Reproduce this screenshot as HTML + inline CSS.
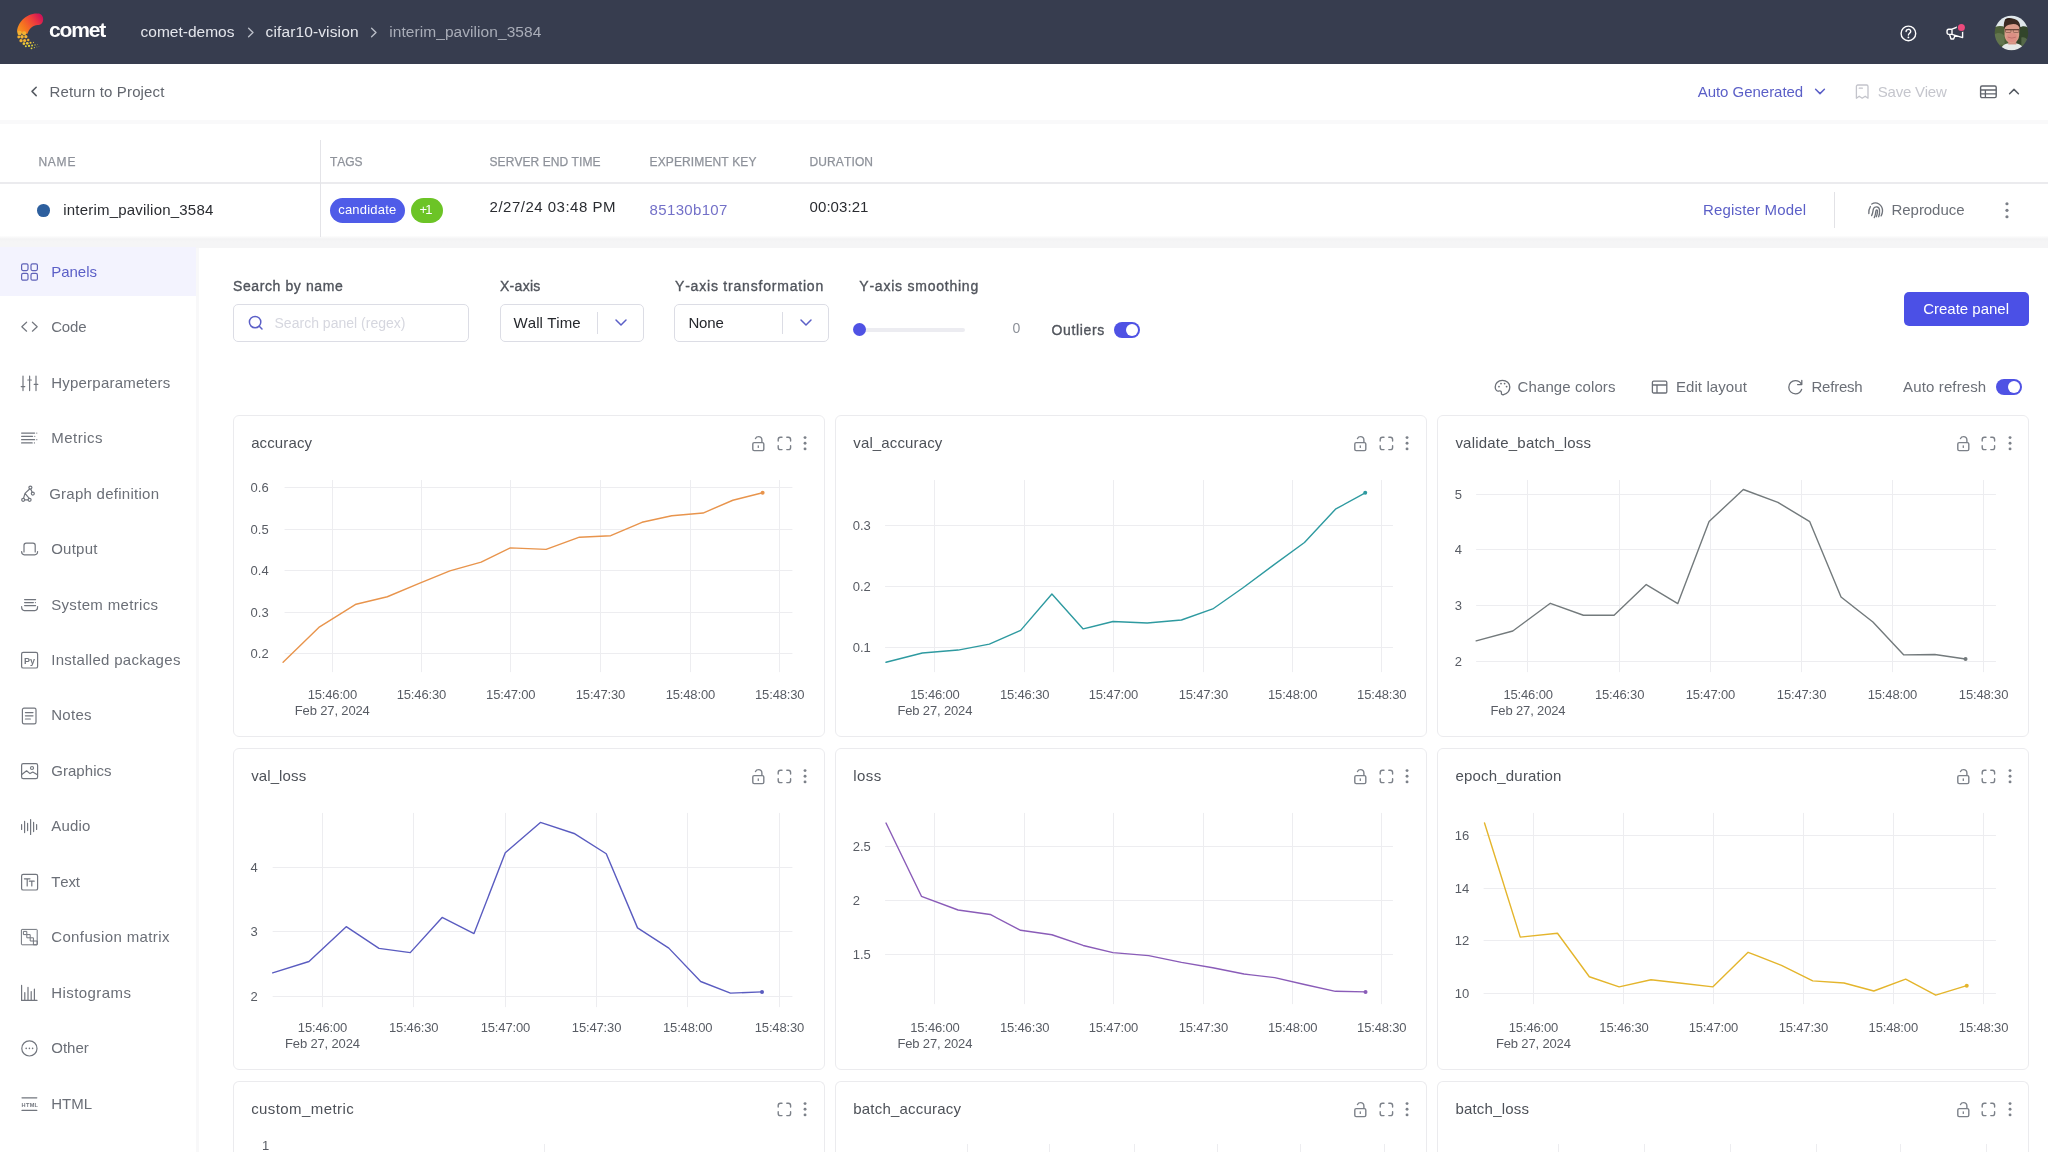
<!DOCTYPE html>
<html><head><meta charset="utf-8"><title>comet</title>
<style>
html,body{margin:0;padding:0;}
body{width:2048px;height:1152px;overflow:hidden;position:relative;background:#fff;font-family:"Liberation Sans",sans-serif;font-kerning:none;-webkit-font-smoothing:antialiased;}
.t{position:absolute;white-space:nowrap;}
.b{position:absolute;box-sizing:border-box;}
#root{position:absolute;left:0;top:0;width:2048px;height:1152px;will-change:transform;}
</style></head><body><div id="root">
<div class="b" style="left:0px;top:0px;width:2048px;height:64px;background:#373d4f;"></div>
<div class="b" style="left:0px;top:120px;width:2048px;height:4px;background:#f9f9fa;"></div>
<div class="b" style="left:0px;top:236px;width:2048px;height:12px;background:#f5f5f6;background:linear-gradient(#fdfdfd 0,#f3f3f4 3px,#f5f5f6 6px);"></div>
<div class="b" style="left:196px;top:248px;width:3px;height:904px;background:#f8f8f9;"></div>
<svg class="b" style="left:8px;top:8px;" width="112" height="48" viewBox="0 0 2048 878" fill="none">
<defs><linearGradient id="lg" x1="620" y1="170" x2="200" y2="470" gradientUnits="userSpaceOnUse">
<stop offset="0" stop-color="#cf1457"/><stop offset=".3" stop-color="#ef3b3d"/><stop offset=".7" stop-color="#f6741f"/><stop offset="1" stop-color="#f59a23"/></linearGradient></defs>
<path d="M545 103 C600 100 648 150 643 215 C638 280 600 315 555 310 C470 300 385 375 355 470 L168 450 C160 290 320 95 545 103 Z" fill="url(#lg)"/>
<g fill="#f2b233">
<circle cx="212" cy="458" r="40"/><circle cx="296" cy="462" r="38"/>
<circle cx="196" cy="530" r="26"/><circle cx="256" cy="528" r="33"/><circle cx="326" cy="524" r="30"/>
<circle cx="238" cy="598" r="30"/><circle cx="304" cy="594" r="29"/><circle cx="370" cy="584" r="22"/>
</g><g fill="#ecc536">
<circle cx="290" cy="652" r="24"/><circle cx="352" cy="646" r="25"/><circle cx="412" cy="636" r="19"/><circle cx="466" cy="628" r="11"/>
</g><g fill="#dfd43a">
<circle cx="326" cy="698" r="18"/><circle cx="384" cy="694" r="21"/><circle cx="440" cy="686" r="17"/><circle cx="494" cy="676" r="12"/><circle cx="540" cy="668" r="7"/>
<circle cx="430" cy="738" r="17"/><circle cx="482" cy="724" r="11"/><circle cx="528" cy="712" r="8"/><circle cx="566" cy="706" r="5"/>
</g></svg>
<div class="t" style="left:49.00px;top:18px;line-height:23px;font-size:21px;color:#fff;letter-spacing:-1.138px;font-weight:700;">comet</div>
<div class="t" style="left:140.50px;top:23px;line-height:17px;font-size:15.5px;color:#e4e6ec;letter-spacing:0.011px;">comet-demos</div>
<div class="t" style="left:265.50px;top:23px;line-height:17px;font-size:15.5px;color:#e4e6ec;letter-spacing:0.130px;">cifar10-vision</div>
<div class="t" style="left:389.30px;top:23px;line-height:17px;font-size:15.5px;color:#a9adb8;letter-spacing:0.060px;">interim_pavilion_3584</div>
<svg class="b" style="left:246.8px;top:26px;" width="8" height="13" viewBox="0 0 8 13" fill="none"><path d="M1.6 2.2 L6 6.5 L1.6 10.8" stroke="#b8bcc6" stroke-width="1.4" stroke-linecap="round" stroke-linejoin="round"/></svg>
<svg class="b" style="left:370.3px;top:26px;" width="8" height="13" viewBox="0 0 8 13" fill="none"><path d="M1.6 2.2 L6 6.5 L1.6 10.8" stroke="#b8bcc6" stroke-width="1.4" stroke-linecap="round" stroke-linejoin="round"/></svg>
<svg class="b" style="left:1898px;top:22.5px;" width="21" height="21" viewBox="0 0 21 21" fill="none"><circle cx="10.4" cy="10.4" r="7.3" stroke="#fff" stroke-width="1.4"/><path d="M8.1 8.6 C8.1 5.6 12.7 5.6 12.7 8.4 C12.7 10.2 10.4 10.2 10.4 12.1" stroke="#fff" stroke-width="1.4" stroke-linecap="round"/><circle cx="10.4" cy="14.4" r=".9" fill="#fff"/></svg>
<svg class="b" style="left:1944px;top:20px;" width="24" height="24" viewBox="0 0 24 24" fill="none"><path d="M4.6 9.2 C3.4 9.2 3 10.2 3 11.8 C3 13.4 3.4 14.4 4.6 14.4 L8 14.4 L8 9.2 Z M8 9.2 L18.6 5 L18.6 17.6 L8 14.4 M5.6 14.6 L7 19 L9.6 19 L11 15.6" stroke="#fff" stroke-width="1.4" stroke-linejoin="round" stroke-linecap="round"/>
<circle cx="17.4" cy="7.4" r="4.6" fill="#373d4f"/><circle cx="17.4" cy="7.4" r="3.5" fill="#ec4a7c"/></svg>
<svg class="b" style="left:1990px;top:12px;" width="44" height="42" viewBox="0 0 1207 1152" fill="none"><defs><clipPath id="av"><ellipse cx="588" cy="575" rx="460" ry="474"/></clipPath>
<filter id="bl" x="-10%" y="-10%" width="120%" height="120%"><feGaussianBlur stdDeviation="20"/></filter></defs>
<g clip-path="url(#av)"><g filter="url(#bl)">
<rect x="60" y="40" width="1100" height="1100" fill="#dfe7ea"/>
<path d="M60 470 C150 380 300 360 420 420 L620 420 L620 1100 L60 1100Z" fill="#4e6138"/>
<path d="M120 620 C220 540 330 580 400 660 L400 900 L120 900Z" fill="#62744d"/>
<path d="M600 430 L800 430 C900 360 1020 380 1100 470 L1100 1100 L600 1100Z" fill="#33452a"/>
<path d="M860 700 C940 680 1000 720 1060 800 L1060 950 L860 950Z" fill="#55684a"/>
<path d="M300 1060 C310 900 420 850 600 850 C800 850 900 900 930 1060 Z" fill="#e6eae8"/>
<rect x="500" y="760" width="220" height="130" fill="#d09080"/>
<path d="M400 420 C400 330 480 300 600 300 C720 300 805 330 805 420 L800 640 C790 780 700 860 600 860 C500 860 410 780 400 640Z" fill="#dc9d8b"/>
<ellipse cx="600" cy="700" rx="150" ry="130" fill="#dd8f84"/>
<path d="M385 470 C360 250 420 150 560 170 C720 170 850 260 830 470 C800 380 740 330 640 330 C520 340 440 360 385 470Z" fill="#3b2b22"/>
<path d="M400 230 C430 160 520 150 640 200 C560 200 470 220 400 230Z" fill="#2a1e19"/>
<path d="M410 472 H800 V500 H410Z" fill="#4a2f26"/>
<rect x="425" y="482" width="150" height="80" rx="24" fill="none" stroke="#6a4438" stroke-width="16"/>
<rect x="640" y="482" width="150" height="80" rx="24" fill="none" stroke="#6a4438" stroke-width="16"/>
<path d="M490 690 Q600 740 710 690" stroke="#b86a66" stroke-width="22" fill="none"/>
</g></g></svg>
<svg class="b" style="left:28px;top:84px;" width="12" height="15" viewBox="0 0 12 15" fill="none"><path d="M8.2 3.2 L4 7.4 L8.2 11.6" stroke="#555a62" stroke-width="1.5" stroke-linecap="round" stroke-linejoin="round"/></svg>
<div class="t" style="left:49.60px;top:83px;line-height:17px;font-size:15px;color:#62666e;letter-spacing:0.140px;">Return to Project</div>
<div class="t" style="left:1697.70px;top:83px;line-height:17px;font-size:15px;color:#5b5fc7;letter-spacing:-0.031px;">Auto Generated</div>
<svg class="b" style="left:1813px;top:85px;" width="14" height="13" viewBox="0 0 14 13" fill="none"><path d="M2.6 4.2 L7 8.6 L11.4 4.2" stroke="#5b5fc7" stroke-width="1.5" stroke-linecap="round" stroke-linejoin="round"/></svg>
<svg class="b" style="left:1854px;top:83px;" width="17" height="18" viewBox="0 0 17 18" fill="none"><path d="M2.4 3.4 C2.4 2.6 3 2 3.8 2 L12.6 2 C13.4 2 14 2.6 14 3.4 L14 15.2 L11.2 13.2 L8.2 15.2 L5.2 13.2 L2.4 15.2 Z" stroke="#c3c4cb" stroke-width="1.3" stroke-linejoin="round"/><path d="M5.2 5.2 L8.4 5.2" stroke="#c3c4cb" stroke-width="1.2" stroke-linecap="round"/></svg>
<div class="t" style="left:1877.80px;top:83px;line-height:17px;font-size:15px;color:#c5c6cd;letter-spacing:-0.239px;">Save View</div>
<svg class="b" style="left:1979px;top:84px;" width="19" height="16" viewBox="0 0 19 16" fill="none"><rect x="1.6" y="2" width="15.6" height="11.6" rx="1.4" stroke="#60646c" stroke-width="1.4"/><path d="M1.6 6 H17.2 M1.6 9.8 H17.2 M6.4 6 V13.6" stroke="#60646c" stroke-width="1.3"/></svg>
<svg class="b" style="left:2007px;top:85px;" width="14" height="13" viewBox="0 0 14 13" fill="none"><path d="M2.6 8.8 L7 4.4 L11.4 8.8" stroke="#555a62" stroke-width="1.5" stroke-linecap="round" stroke-linejoin="round"/></svg>
<div class="t" style="left:38.40px;top:155px;line-height:14px;font-size:12px;color:#8e929a;letter-spacing:0.777px;-webkit-text-stroke:0.25px #8e929a;">NAME</div>
<div class="t" style="left:330.00px;top:155px;line-height:14px;font-size:12px;color:#8e929a;letter-spacing:-0.057px;-webkit-text-stroke:0.25px #8e929a;">TAGS</div>
<div class="t" style="left:489.50px;top:155px;line-height:14px;font-size:12px;color:#8e929a;letter-spacing:0.070px;-webkit-text-stroke:0.25px #8e929a;">SERVER END TIME</div>
<div class="t" style="left:649.50px;top:155px;line-height:14px;font-size:12px;color:#8e929a;letter-spacing:0.126px;-webkit-text-stroke:0.25px #8e929a;">EXPERIMENT KEY</div>
<div class="t" style="left:809.50px;top:155px;line-height:14px;font-size:12px;color:#8e929a;letter-spacing:0.119px;-webkit-text-stroke:0.25px #8e929a;">DURATION</div>
<div class="b" style="left:0px;top:182px;width:2048px;height:2px;background:#ebebee;"></div>
<div class="b" style="left:320px;top:140px;width:1px;height:97px;background:#e4e4e8;"></div>
<div class="b" style="left:37.4px;top:204px;width:12.6px;height:12.6px;background:#2d5f9e;border-radius:50%;"></div>
<div class="t" style="left:63.20px;top:201px;line-height:17px;font-size:15px;color:#2a2c31;letter-spacing:0.209px;">interim_pavilion_3584</div>
<div class="b" style="left:329.8px;top:198px;width:75.4px;height:25px;background:#4f5ce8;border-radius:13px;"></div>
<div class="t" style="left:338.20px;top:202px;line-height:15px;font-size:13px;color:#fff;letter-spacing:0.203px;">candidate</div>
<div class="b" style="left:410.8px;top:198px;width:32.2px;height:25px;background:#6cc426;border-radius:13px;"></div>
<div class="t" style="left:419.60px;top:202px;line-height:15px;font-size:13px;color:#fff;letter-spacing:-2.020px;">+1</div>
<div class="t" style="left:489.60px;top:198px;line-height:17px;font-size:15px;color:#2a2c31;letter-spacing:0.492px;">2/27/24 03:48 PM</div>
<div class="t" style="left:649.60px;top:201px;line-height:17px;font-size:15px;color:#7370c8;letter-spacing:0.340px;">85130b107</div>
<div class="t" style="left:809.60px;top:198px;line-height:17px;font-size:15px;color:#2a2c31;letter-spacing:0.059px;">00:03:21</div>
<div class="t" style="left:1703.00px;top:201px;line-height:17px;font-size:15px;color:#5b5fc7;letter-spacing:0.163px;">Register Model</div>
<div class="b" style="left:1834px;top:192px;width:1px;height:36px;background:#e2e2e6;"></div>
<svg class="b" style="left:1850px;top:190px;" width="180" height="40" viewBox="0 0 2048 455" fill="none"><g stroke="#6e727a" stroke-width="15" stroke-linecap="round" fill="none">
<path d="M214 268 C212 235 218 210 232 188"/>
<path d="M248 160 C300 125 372 165 370 240 C369 262 362 280 354 294"/>
<path d="M246 292 C262 262 260 240 266 216 C276 180 332 184 336 226 C339 256 336 280 326 304"/>
<path d="M276 314 C290 288 292 262 294 242 C296 222 314 224 313 242 C312 264 308 284 300 304"/>
</g>
<g fill="#7b7f87"><circle cx="1786" cy="156" r="18"/><circle cx="1786" cy="231" r="18"/><circle cx="1786" cy="304" r="18"/></g></svg>
<div class="t" style="left:1891.50px;top:201px;line-height:17px;font-size:15px;color:#6b6f77;letter-spacing:-0.047px;">Reproduce</div>
<div class="b" style="left:0px;top:247px;width:196px;height:49px;background:#f3f3fe;"></div>
<div class="t" style="left:51.20px;top:263px;line-height:17px;font-size:15px;color:#5b5fc7;letter-spacing:-0.013px;">Panels</div>
<svg class="b" style="left:20px;top:261.8px;" width="20" height="20" viewBox="0 0 20 20" fill="none"><g stroke="#5f62b8" stroke-width="1.2" stroke-linecap="round" stroke-linejoin="round"><rect x="1.6" y="1.8" width="6.4" height="6.8" rx="1.5"/><rect x="11" y="1.8" width="6.4" height="6.8" rx="1.5"/><rect x="1.6" y="11.4" width="6.4" height="6.8" rx="1.5"/><rect x="11" y="11.4" width="6.4" height="6.8" rx="1.5"/></g></svg>
<div class="t" style="left:51.20px;top:318px;line-height:17px;font-size:15px;color:#6b6f77;letter-spacing:-0.152px;">Code</div>
<svg class="b" style="left:20px;top:317.27px;" width="20" height="20" viewBox="0 0 20 20" fill="none"><g stroke="#72767e" stroke-width="1.2" stroke-linecap="round" stroke-linejoin="round"><path d="M6.6 5.2 L1.8 9.7 L6.6 14.2 M12.4 5.2 L17.2 9.7 L12.4 14.2"/></g></svg>
<div class="t" style="left:51.20px;top:374px;line-height:17px;font-size:15px;color:#6b6f77;letter-spacing:0.223px;">Hyperparameters</div>
<svg class="b" style="left:20px;top:372.74px;" width="20" height="20" viewBox="0 0 20 20" fill="none"><g stroke="#72767e" stroke-width="1.2" stroke-linecap="round" stroke-linejoin="round"><path d="M3 3 V17.6 M9.6 3 V17.6 M16 3 V17.6 M1.2 13.6 H4.8 M7.8 7 H11.4 M14.2 11.4 H17.8"/></g></svg>
<div class="t" style="left:51.20px;top:429px;line-height:17px;font-size:15px;color:#6b6f77;letter-spacing:0.511px;">Metrics</div>
<svg class="b" style="left:20px;top:428.21000000000004px;" width="20" height="20" viewBox="0 0 20 20" fill="none"><g stroke="#72767e" stroke-width="1.2" stroke-linecap="round" stroke-linejoin="round"><path d="M1.6 5.05 H14.6 M1.6 8.35 H12.6 M1.6 11.65 H14.6 M1.6 14.95 H12.2"/></g><g fill="#72767e"><circle cx="16.8" cy="5.05" r=".6"/><circle cx="14.8" cy="8.35" r=".6"/><circle cx="16.8" cy="11.65" r=".6"/><circle cx="14.4" cy="14.95" r=".6"/></g></svg>
<div class="t" style="left:49.20px;top:485px;line-height:17px;font-size:15px;color:#6b6f77;letter-spacing:0.260px;">Graph definition</div>
<svg class="b" style="left:20px;top:483.68px;" width="20" height="20" viewBox="0 0 20 20" fill="none"><g stroke="#72767e" stroke-width="1.2" stroke-linecap="round" stroke-linejoin="round"><circle cx="10.4" cy="3.6" r="1.5"/><circle cx="12.8" cy="9.6" r="1.5"/><circle cx="3.2" cy="15.8" r="1.5"/><circle cx="9.6" cy="15.8" r="1.5"/><path d="M9.6 5 L5 9.4 L3.6 14.2 M5 9.4 L9.2 14.4 M10.8 5.2 L12.2 8.2 M4.8 15.8 H8"/></g></svg>
<div class="t" style="left:51.20px;top:540px;line-height:17px;font-size:15px;color:#6b6f77;letter-spacing:0.234px;">Output</div>
<svg class="b" style="left:20px;top:539.15px;" width="20" height="20" viewBox="0 0 20 20" fill="none"><g stroke="#72767e" stroke-width="1.2" stroke-linecap="round" stroke-linejoin="round"><path d="M4 13 V6.4 C4 5 5 4.2 6.2 4.2 H13 C14.2 4.2 15.2 5 15.2 6.4 V13 M1.6 12.6 C1.6 15 2.6 15.8 4.4 15.8 H14.6 C16.6 15.8 17.6 15 17.6 12.6"/></g></svg>
<div class="t" style="left:51.20px;top:596px;line-height:17px;font-size:15px;color:#6b6f77;letter-spacing:0.330px;">System metrics</div>
<svg class="b" style="left:20px;top:594.62px;" width="20" height="20" viewBox="0 0 20 20" fill="none"><g stroke="#72767e" stroke-width="1.2" stroke-linecap="round" stroke-linejoin="round"><path d="M4.6 4.6 H15.6 M4.6 7.6 H13.4 M4.6 10.6 H15.6 M1.6 11.6 C1.6 14.6 2.6 15.6 4.4 15.6 H14.8 C16.6 15.6 17.6 14.6 17.6 11.6"/></g><g fill="#72767e"><circle cx="15.4" cy="7.6" r=".6"/></g></svg>
<div class="t" style="left:51.20px;top:651px;line-height:17px;font-size:15px;color:#6b6f77;letter-spacing:0.291px;">Installed packages</div>
<svg class="b" style="left:20px;top:650.09px;" width="20" height="20" viewBox="0 0 20 20" fill="none"><g stroke="#72767e" stroke-width="1.2" stroke-linecap="round" stroke-linejoin="round"><rect x="1.6" y="2.4" width="16" height="15.6" rx="1.6"/></g><text x="4" y="13.6" font-family="Liberation Sans" font-size="9" font-weight="700" fill="#72767e">Py</text></svg>
<div class="t" style="left:51.20px;top:706px;line-height:17px;font-size:15px;color:#6b6f77;letter-spacing:0.304px;">Notes</div>
<svg class="b" style="left:20px;top:705.5600000000001px;" width="20" height="20" viewBox="0 0 20 20" fill="none"><g stroke="#72767e" stroke-width="1.2" stroke-linecap="round" stroke-linejoin="round"><rect x="2.4" y="2.2" width="13.6" height="15.6" rx="1.6"/><path d="M5.4 6.6 H13 M5.4 9.8 H13 M5.4 13 H10.4"/></g></svg>
<div class="t" style="left:51.20px;top:762px;line-height:17px;font-size:15px;color:#6b6f77;letter-spacing:0.054px;">Graphics</div>
<svg class="b" style="left:20px;top:761.0300000000001px;" width="20" height="20" viewBox="0 0 20 20" fill="none"><g stroke="#72767e" stroke-width="1.2" stroke-linecap="round" stroke-linejoin="round"><rect x="1.6" y="2.6" width="16" height="15" rx="1.6"/><circle cx="12" cy="7" r="1.5"/><path d="M1.8 13.4 L6.6 9.8 L10 12.6 L12.8 11 L17.4 13.8"/></g></svg>
<div class="t" style="left:51.20px;top:817px;line-height:17px;font-size:15px;color:#6b6f77;letter-spacing:0.209px;">Audio</div>
<svg class="b" style="left:20px;top:816.5000000000001px;" width="20" height="20" viewBox="0 0 20 20" fill="none"><g stroke="#72767e" stroke-width="1.2" stroke-linecap="round" stroke-linejoin="round"><path d="M1.6 7.6 V12.4 M4.6 4.4 V15.6 M7.6 6.4 V13.6 M10.6 2.6 V17.4 M13.6 5.4 V14.6 M16.6 7.6 V12.4"/></g></svg>
<div class="t" style="left:51.20px;top:873px;line-height:17px;font-size:15px;color:#6b6f77;letter-spacing:-0.125px;">Text</div>
<svg class="b" style="left:20px;top:871.9699999999999px;" width="20" height="20" viewBox="0 0 20 20" fill="none"><g stroke="#72767e" stroke-width="1.2" stroke-linecap="round" stroke-linejoin="round"><rect x="1.6" y="2.4" width="16" height="15.6" rx="1.6"/><path d="M4.4 6.8 H10 M7.2 6.8 V14 M9.4 9.2 H14.2 M11.8 9.2 V14"/></g></svg>
<div class="t" style="left:51.20px;top:928px;line-height:17px;font-size:15px;color:#6b6f77;letter-spacing:0.377px;">Confusion matrix</div>
<svg class="b" style="left:20px;top:927.4399999999999px;" width="20" height="20" viewBox="0 0 20 20" fill="none"><g stroke="#72767e" stroke-width="1" stroke-linejoin="round"><rect x="1.4" y="2.4" width="15.8" height="15.4" rx=".6"/><rect x="3.4" y="4.4" width="3.4" height="3.2" /><rect x="6.8" y="7.6" width="3.4" height="3.2"/><rect x="10.2" y="10.8" width="3.2" height="3.2"/><rect x="13.4" y="14" width="3.8" height="3.8"/></g></svg>
<div class="t" style="left:51.20px;top:984px;line-height:17px;font-size:15px;color:#6b6f77;letter-spacing:0.439px;">Histograms</div>
<svg class="b" style="left:20px;top:982.91px;" width="20" height="20" viewBox="0 0 20 20" fill="none"><g stroke="#72767e" stroke-width="1.2" stroke-linecap="round" stroke-linejoin="round"><path d="M1.6 2.4 V17.4 H17 M4.8 9.6 V17 M8 4.4 V17 M11.2 8.6 V17 M14.4 6.2 V17"/></g></svg>
<div class="t" style="left:51.20px;top:1039px;line-height:17px;font-size:15px;color:#6b6f77;letter-spacing:0.021px;">Other</div>
<svg class="b" style="left:20px;top:1038.3799999999999px;" width="20" height="20" viewBox="0 0 20 20" fill="none"><g stroke="#72767e" stroke-width="1.2" stroke-linecap="round" stroke-linejoin="round"><circle cx="9.4" cy="10.4" r="7.6"/></g><g fill="#72767e"><circle cx="6.2" cy="10.4" r=".8"/><circle cx="9.4" cy="10.4" r=".8"/><circle cx="12.6" cy="10.4" r=".8"/></g></svg>
<div class="t" style="left:51.20px;top:1095px;line-height:17px;font-size:15px;color:#6b6f77;letter-spacing:-0.010px;">HTML</div>
<svg class="b" style="left:20px;top:1093.85px;" width="20" height="20" viewBox="0 0 20 20" fill="none"><g stroke="#72767e" stroke-width="1.2" stroke-linecap="round" stroke-linejoin="round"><path d="M2 3.8 H16.8 M2 16.4 H16.8"/></g><text x="1.6" y="12.6" font-family="Liberation Sans" font-size="5.6" font-weight="700" fill="#72767e" letter-spacing=".3">HTML</text></svg>
<div class="t" style="left:233.00px;top:278px;line-height:16px;font-size:14px;color:#50545c;letter-spacing:0.604px;-webkit-text-stroke:0.35px #50545c;">Search by name</div>
<div class="b" style="left:232.5px;top:304px;width:236.5px;height:38px;background:#fff;border:1px solid #dcdde5;border-radius:5px;"></div>
<svg class="b" style="left:246px;top:313px;" width="20" height="20" viewBox="0 0 20 20" fill="none"><circle cx="9.1" cy="9.1" r="5.7" stroke="#5b5fc7" stroke-width="1.5"/><path d="M13.3 13.3 L16 16" stroke="#5b5fc7" stroke-width="1.5" stroke-linecap="round"/></svg>
<div class="t" style="left:274.50px;top:315px;line-height:16px;font-size:14px;color:#d6d7df;letter-spacing:0.014px;">Search panel (regex)</div>
<div class="t" style="left:500.00px;top:278px;line-height:16px;font-size:14px;color:#50545c;letter-spacing:0.281px;-webkit-text-stroke:0.35px #50545c;">X-axis</div>
<div class="b" style="left:499.5px;top:304px;width:144.2px;height:38px;background:#fff;border:1px solid #dcdde5;border-radius:5px;"></div>
<div class="t" style="left:513.60px;top:314px;line-height:17px;font-size:15px;color:#25272c;letter-spacing:0.042px;">Wall Time</div>
<div class="b" style="left:597.4px;top:312px;width:1px;height:22px;background:#dcdde5;"></div>
<svg class="b" style="left:613.5px;top:316px;" width="14" height="13" viewBox="0 0 14 13" fill="none"><path d="M2 4 L7 9 L12 4" stroke="#5b5fc7" stroke-width="1.5" stroke-linecap="round" stroke-linejoin="round"/></svg>
<div class="t" style="left:675.00px;top:278px;line-height:16px;font-size:14px;color:#50545c;letter-spacing:0.797px;-webkit-text-stroke:0.35px #50545c;">Y-axis transformation</div>
<div class="b" style="left:674.2px;top:304px;width:154.6px;height:38px;background:#fff;border:1px solid #dcdde5;border-radius:5px;"></div>
<div class="t" style="left:688.40px;top:314px;line-height:17px;font-size:15px;color:#25272c;letter-spacing:-0.152px;">None</div>
<div class="b" style="left:782.3px;top:312px;width:1px;height:22px;background:#dcdde5;"></div>
<svg class="b" style="left:798.6px;top:316px;" width="14" height="13" viewBox="0 0 14 13" fill="none"><path d="M2 4 L7 9 L12 4" stroke="#5b5fc7" stroke-width="1.5" stroke-linecap="round" stroke-linejoin="round"/></svg>
<div class="t" style="left:859.30px;top:278px;line-height:16px;font-size:14px;color:#50545c;letter-spacing:0.768px;-webkit-text-stroke:0.35px #50545c;">Y-axis smoothing</div>
<div class="b" style="left:860px;top:327.6px;width:105px;height:4.2px;background:#ececf1;border-radius:2px;"></div>
<div class="b" style="left:853.2px;top:323.2px;width:13px;height:13px;background:#4f52e4;border-radius:50%;"></div>
<div class="t" style="left:1012.40px;top:320px;line-height:16px;font-size:14px;color:#8c9098;">0</div>
<div class="t" style="left:1051.50px;top:322px;line-height:16px;font-size:14px;color:#50545c;letter-spacing:0.638px;-webkit-text-stroke:0.35px #50545c;">Outliers</div>
<div class="b" style="left:1114px;top:321.5px;width:26.2px;height:16.4px;background:#4f52e4;border-radius:9px;"></div>
<div class="b" style="left:1125.6px;top:323.5px;width:12.4px;height:12.4px;background:#fff;border-radius:50%;"></div>
<div class="b" style="left:1903.5px;top:292px;width:125.3px;height:33.8px;background:#4b50e6;border-radius:5px;"></div>
<div class="t" style="left:1923.20px;top:300px;line-height:17px;font-size:15px;color:#fff;letter-spacing:-0.008px;">Create panel</div>
<svg class="b" style="left:1492.5px;top:377.5px;" width="19" height="19" viewBox="0 0 19 19" fill="none"><g stroke="#6b6f77" stroke-width="1.3" stroke-linecap="round" stroke-linejoin="round">
<path d="M9.4 2.4 C4.8 2.4 2.2 5.6 2.2 9 C2.2 12 4.2 13.6 6 13 C7.6 12.4 8.6 13.4 8.4 15 C8.2 16.4 9.4 17 10.6 16.6 C14.4 15.6 16.8 12.6 16.8 9 C16.8 5.2 13.6 2.4 9.4 2.4Z"/></g>
<g fill="#6b6f77"><circle cx="6" cy="8.6" r=".9"/><circle cx="8" cy="5.6" r=".9"/><circle cx="11.6" cy="5.6" r=".9"/><circle cx="13.6" cy="8.6" r=".9"/></g></svg>
<div class="t" style="left:1517.60px;top:378px;line-height:17px;font-size:15px;color:#6b6f77;letter-spacing:0.090px;">Change colors</div>
<svg class="b" style="left:1650px;top:378px;" width="19" height="18" viewBox="0 0 19 18" fill="none"><rect x="2.4" y="3.2" width="14.4" height="11.8" rx="1.2" stroke="#6b6f77" stroke-width="1.3"/><path d="M2.4 7 H16.8 M7 7 V15" stroke="#6b6f77" stroke-width="1.3"/></svg>
<div class="t" style="left:1675.90px;top:378px;line-height:17px;font-size:15px;color:#6b6f77;letter-spacing:0.096px;">Edit layout</div>
<svg class="b" style="left:1786px;top:377.5px;" width="19" height="19" viewBox="0 0 19 19" fill="none"><path d="M15.4 6.2 C14.2 3.8 11.8 2.6 9.4 2.6 C5.6 2.6 2.8 5.6 2.8 9.2 C2.8 12.8 5.6 15.8 9.4 15.8 C12.2 15.8 14.6 14 15.6 11.4 M15.8 2.4 V6.6 H11.6" stroke="#6b6f77" stroke-width="1.3" stroke-linecap="round" stroke-linejoin="round"/></svg>
<div class="t" style="left:1811.50px;top:378px;line-height:17px;font-size:15px;color:#6b6f77;letter-spacing:-0.220px;">Refresh</div>
<div class="t" style="left:1903.10px;top:378px;line-height:17px;font-size:15px;color:#6b6f77;letter-spacing:0.127px;">Auto refresh</div>
<div class="b" style="left:1996px;top:378.8px;width:26.2px;height:16.4px;background:#4f52e4;border-radius:9px;"></div>
<div class="b" style="left:2007.6px;top:380.8px;width:12.4px;height:12.4px;background:#fff;border-radius:50%;"></div>
<div class="b" style="left:233px;top:415px;width:592px;height:322px;background:#fff;border:1px solid #ebebee;border-radius:6px;"></div>
<div class="t" style="left:251.15px;top:434px;line-height:17px;font-size:15px;color:#4d5158;letter-spacing:0.125px;">accuracy</div>
<svg class="b" style="left:750.25px;top:434.3px;" width="16" height="19" viewBox="0 0 16 19" fill="none"><rect x="2.8" y="8.6" width="11" height="8" rx="1.4" stroke="#7c8189" stroke-width="1.4"/><path d="M11.9 8.4 V6 C11.9 3.7 10.4 2.65 8.7 2.65 C7.2 2.65 6 3.4 5.5 4.5" stroke="#7c8189" stroke-width="1.4" stroke-linecap="round" fill="none"/><path d="M8.3 11.8 V13.4" stroke="#7c8189" stroke-width="1.3" stroke-linecap="round"/></svg>
<svg class="b" style="left:775.55px;top:435.3px;" width="17" height="17" viewBox="0 0 17 17" fill="none"><path d="M2.2 6 V4.4 C2.2 3 3 2.2 4.4 2.2 H6 M10.8 2.2 H12.4 C13.8 2.2 14.6 3 14.6 4.4 V6 M14.6 10.8 V12.4 C14.6 13.8 13.8 14.6 12.4 14.6 H10.8 M6 14.6 H4.4 C3 14.6 2.2 13.8 2.2 12.4 V10.8" stroke="#7c8189" stroke-width="1.4" stroke-linecap="round"/></svg>
<svg class="b" style="left:800.25px;top:433.3px;" width="10" height="22" viewBox="0 0 10 22" fill="none"><g fill="#7c8189"><circle cx="5.05" cy="4.6" r="1.45"/><circle cx="5.05" cy="10.3" r="1.45"/><circle cx="5.05" cy="15.9" r="1.45"/></g></svg>
<svg class="b" style="left:233px;top:415px;" width="592" height="322" viewBox="0 0 592 322" fill="none"><path d="M51.57 72.50 H559.41" stroke="#ededf0" stroke-width="1"/><path d="M51.57 114.50 H559.41" stroke="#ededf0" stroke-width="1"/><path d="M51.57 155.50 H559.41" stroke="#ededf0" stroke-width="1"/><path d="M51.57 197.50 H559.41" stroke="#ededf0" stroke-width="1"/><path d="M51.57 238.50 H559.41" stroke="#ededf0" stroke-width="1"/><path d="M99.50 65.00 V257.11" stroke="#ededf0" stroke-width="1"/><path d="M188.50 65.00 V257.11" stroke="#ededf0" stroke-width="1"/><path d="M277.50 65.00 V257.11" stroke="#ededf0" stroke-width="1"/><path d="M367.50 65.00 V257.11" stroke="#ededf0" stroke-width="1"/><path d="M457.50 65.00 V257.11" stroke="#ededf0" stroke-width="1"/><path d="M546.50 65.00 V257.11" stroke="#ededf0" stroke-width="1"/><path d="M50.08 247.28 L85.82 212.43 L123.05 189.20 L154.33 181.75 L185.60 168.65 L216.88 155.84 L248.15 147.20 L277.34 132.91 L313.08 134.39 L346.44 122.18 L377.72 120.69 L408.99 107.29 L438.78 100.74 L470.05 98.06 L499.84 85.25 L529.62 77.80" stroke="#e8944c" stroke-width="1.4" stroke-linejoin="round" stroke-linecap="round" fill="none"/><circle cx="529.62" cy="77.80" r="2" fill="#e8944c"/></svg>
<div class="t" style="left:250.55px;top:480px;line-height:15px;font-size:13px;color:#585c64;">0.6</div>
<div class="t" style="left:250.55px;top:522px;line-height:15px;font-size:13px;color:#585c64;">0.5</div>
<div class="t" style="left:250.55px;top:563px;line-height:15px;font-size:13px;color:#585c64;">0.4</div>
<div class="t" style="left:250.55px;top:605px;line-height:15px;font-size:13px;color:#585c64;">0.3</div>
<div class="t" style="left:250.55px;top:646px;line-height:15px;font-size:13px;color:#585c64;">0.2</div>
<div class="t" style="left:307.68px;top:687px;line-height:15px;font-size:13px;color:#585c64;letter-spacing:-0.157px;">15:46:00</div>
<div class="t" style="left:396.73px;top:687px;line-height:15px;font-size:13px;color:#585c64;letter-spacing:-0.157px;">15:46:30</div>
<div class="t" style="left:486.09px;top:687px;line-height:15px;font-size:13px;color:#585c64;letter-spacing:-0.157px;">15:47:00</div>
<div class="t" style="left:575.74px;top:687px;line-height:15px;font-size:13px;color:#585c64;letter-spacing:-0.157px;">15:47:30</div>
<div class="t" style="left:665.69px;top:687px;line-height:15px;font-size:13px;color:#585c64;letter-spacing:-0.157px;">15:48:00</div>
<div class="t" style="left:755.05px;top:687px;line-height:15px;font-size:13px;color:#585c64;letter-spacing:-0.157px;">15:48:30</div>
<div class="t" style="left:294.83px;top:703px;line-height:15px;font-size:13px;color:#585c64;letter-spacing:-0.147px;">Feb 27, 2024</div>
<div class="b" style="left:835px;top:415px;width:592px;height:322px;background:#fff;border:1px solid #ebebee;border-radius:6px;"></div>
<div class="t" style="left:853.30px;top:434px;line-height:17px;font-size:15px;color:#4d5158;letter-spacing:0.133px;">val_accuracy</div>
<svg class="b" style="left:1352.4px;top:434.3px;" width="16" height="19" viewBox="0 0 16 19" fill="none"><rect x="2.8" y="8.6" width="11" height="8" rx="1.4" stroke="#7c8189" stroke-width="1.4"/><path d="M11.9 8.4 V6 C11.9 3.7 10.4 2.65 8.7 2.65 C7.2 2.65 6 3.4 5.5 4.5" stroke="#7c8189" stroke-width="1.4" stroke-linecap="round" fill="none"/><path d="M8.3 11.8 V13.4" stroke="#7c8189" stroke-width="1.3" stroke-linecap="round"/></svg>
<svg class="b" style="left:1377.6999999999998px;top:435.3px;" width="17" height="17" viewBox="0 0 17 17" fill="none"><path d="M2.2 6 V4.4 C2.2 3 3 2.2 4.4 2.2 H6 M10.8 2.2 H12.4 C13.8 2.2 14.6 3 14.6 4.4 V6 M14.6 10.8 V12.4 C14.6 13.8 13.8 14.6 12.4 14.6 H10.8 M6 14.6 H4.4 C3 14.6 2.2 13.8 2.2 12.4 V10.8" stroke="#7c8189" stroke-width="1.4" stroke-linecap="round"/></svg>
<svg class="b" style="left:1402.4px;top:433.3px;" width="10" height="22" viewBox="0 0 10 22" fill="none"><g fill="#7c8189"><circle cx="5.05" cy="4.6" r="1.45"/><circle cx="5.05" cy="10.3" r="1.45"/><circle cx="5.05" cy="15.9" r="1.45"/></g></svg>
<svg class="b" style="left:835px;top:415px;" width="592" height="322" viewBox="0 0 592 322" fill="none"><path d="M50.10 110.50 H557.94" stroke="#ededf0" stroke-width="1"/><path d="M50.10 171.50 H557.94" stroke="#ededf0" stroke-width="1"/><path d="M50.10 232.50 H557.94" stroke="#ededf0" stroke-width="1"/><path d="M99.50 65.00 V257.11" stroke="#ededf0" stroke-width="1"/><path d="M189.50 65.00 V257.11" stroke="#ededf0" stroke-width="1"/><path d="M278.50 65.00 V257.11" stroke="#ededf0" stroke-width="1"/><path d="M368.50 65.00 V257.11" stroke="#ededf0" stroke-width="1"/><path d="M457.50 65.00 V257.11" stroke="#ededf0" stroke-width="1"/><path d="M546.50 65.00 V257.11" stroke="#ededf0" stroke-width="1"/><path d="M51.00 247.28 L87.33 238.05 L123.08 235.07 L154.35 229.11 L185.62 215.41 L216.90 179.07 L248.17 213.92 L277.96 206.47 L312.21 207.96 L346.46 204.99 L377.74 193.96 L408.42 172.52 L438.80 149.88 L469.48 127.54 L500.45 94.18 L530.24 77.80" stroke="#2e9aa0" stroke-width="1.4" stroke-linejoin="round" stroke-linecap="round" fill="none"/><circle cx="530.24" cy="77.80" r="2" fill="#2e9aa0"/></svg>
<div class="t" style="left:852.70px;top:518px;line-height:15px;font-size:13px;color:#585c64;">0.3</div>
<div class="t" style="left:852.70px;top:579px;line-height:15px;font-size:13px;color:#585c64;">0.2</div>
<div class="t" style="left:852.70px;top:640px;line-height:15px;font-size:13px;color:#585c64;">0.1</div>
<div class="t" style="left:910.29px;top:687px;line-height:15px;font-size:13px;color:#585c64;letter-spacing:-0.157px;">15:46:00</div>
<div class="t" style="left:999.95px;top:687px;line-height:15px;font-size:13px;color:#585c64;letter-spacing:-0.157px;">15:46:30</div>
<div class="t" style="left:1088.71px;top:687px;line-height:15px;font-size:13px;color:#585c64;letter-spacing:-0.157px;">15:47:00</div>
<div class="t" style="left:1178.66px;top:687px;line-height:15px;font-size:13px;color:#585c64;letter-spacing:-0.157px;">15:47:30</div>
<div class="t" style="left:1268.01px;top:687px;line-height:15px;font-size:13px;color:#585c64;letter-spacing:-0.157px;">15:48:00</div>
<div class="t" style="left:1357.07px;top:687px;line-height:15px;font-size:13px;color:#585c64;letter-spacing:-0.157px;">15:48:30</div>
<div class="t" style="left:897.44px;top:703px;line-height:15px;font-size:13px;color:#585c64;letter-spacing:-0.147px;">Feb 27, 2024</div>
<div class="b" style="left:1437px;top:415px;width:592px;height:322px;background:#fff;border:1px solid #ebebee;border-radius:6px;"></div>
<div class="t" style="left:1455.40px;top:434px;line-height:17px;font-size:15px;color:#4d5158;letter-spacing:0.214px;">validate_batch_loss</div>
<svg class="b" style="left:1954.5px;top:434.3px;" width="16" height="19" viewBox="0 0 16 19" fill="none"><rect x="2.8" y="8.6" width="11" height="8" rx="1.4" stroke="#7c8189" stroke-width="1.4"/><path d="M11.9 8.4 V6 C11.9 3.7 10.4 2.65 8.7 2.65 C7.2 2.65 6 3.4 5.5 4.5" stroke="#7c8189" stroke-width="1.4" stroke-linecap="round" fill="none"/><path d="M8.3 11.8 V13.4" stroke="#7c8189" stroke-width="1.3" stroke-linecap="round"/></svg>
<svg class="b" style="left:1979.8px;top:435.3px;" width="17" height="17" viewBox="0 0 17 17" fill="none"><path d="M2.2 6 V4.4 C2.2 3 3 2.2 4.4 2.2 H6 M10.8 2.2 H12.4 C13.8 2.2 14.6 3 14.6 4.4 V6 M14.6 10.8 V12.4 C14.6 13.8 13.8 14.6 12.4 14.6 H10.8 M6 14.6 H4.4 C3 14.6 2.2 13.8 2.2 12.4 V10.8" stroke="#7c8189" stroke-width="1.4" stroke-linecap="round"/></svg>
<svg class="b" style="left:2004.5px;top:433.3px;" width="10" height="22" viewBox="0 0 10 22" fill="none"><g fill="#7c8189"><circle cx="5.05" cy="4.6" r="1.45"/><circle cx="5.05" cy="10.3" r="1.45"/><circle cx="5.05" cy="15.9" r="1.45"/></g></svg>
<svg class="b" style="left:1437px;top:415px;" width="592" height="322" viewBox="0 0 592 322" fill="none"><path d="M39.17 79.50 H558.92" stroke="#ededf0" stroke-width="1"/><path d="M39.17 134.50 H558.92" stroke="#ededf0" stroke-width="1"/><path d="M39.17 190.50 H558.92" stroke="#ededf0" stroke-width="1"/><path d="M39.17 246.50 H558.92" stroke="#ededf0" stroke-width="1"/><path d="M90.50 65.00 V257.11" stroke="#ededf0" stroke-width="1"/><path d="M182.50 65.00 V257.11" stroke="#ededf0" stroke-width="1"/><path d="M273.50 65.00 V257.11" stroke="#ededf0" stroke-width="1"/><path d="M364.50 65.00 V257.11" stroke="#ededf0" stroke-width="1"/><path d="M455.50 65.00 V257.11" stroke="#ededf0" stroke-width="1"/><path d="M546.50 65.00 V257.11" stroke="#ededf0" stroke-width="1"/><path d="M39.17 225.83 L75.80 216.01 L113.33 188.31 L146.39 200.22 L177.07 200.22 L209.24 169.54 L240.81 188.60 L272.09 106.40 L306.34 74.53 L340.89 87.33 L372.76 106.69 L404.04 182.05 L435.91 207.07 L466.58 239.83 L497.86 239.54 L528.54 244.00" stroke="#737a7c" stroke-width="1.4" stroke-linejoin="round" stroke-linecap="round" fill="none"/><circle cx="528.54" cy="244.00" r="2" fill="#737a7c"/></svg>
<div class="t" style="left:1454.80px;top:487px;line-height:15px;font-size:13px;color:#585c64;">5</div>
<div class="t" style="left:1454.80px;top:542px;line-height:15px;font-size:13px;color:#585c64;">4</div>
<div class="t" style="left:1454.80px;top:598px;line-height:15px;font-size:13px;color:#585c64;">3</div>
<div class="t" style="left:1454.80px;top:654px;line-height:15px;font-size:13px;color:#585c64;">2</div>
<div class="t" style="left:1503.44px;top:687px;line-height:15px;font-size:13px;color:#585c64;letter-spacing:-0.157px;">15:46:00</div>
<div class="t" style="left:1594.88px;top:687px;line-height:15px;font-size:13px;color:#585c64;letter-spacing:-0.157px;">15:46:30</div>
<div class="t" style="left:1685.73px;top:687px;line-height:15px;font-size:13px;color:#585c64;letter-spacing:-0.157px;">15:47:00</div>
<div class="t" style="left:1776.87px;top:687px;line-height:15px;font-size:13px;color:#585c64;letter-spacing:-0.157px;">15:47:30</div>
<div class="t" style="left:1867.72px;top:687px;line-height:15px;font-size:13px;color:#585c64;letter-spacing:-0.157px;">15:48:00</div>
<div class="t" style="left:1958.86px;top:687px;line-height:15px;font-size:13px;color:#585c64;letter-spacing:-0.157px;">15:48:30</div>
<div class="t" style="left:1490.59px;top:703px;line-height:15px;font-size:13px;color:#585c64;letter-spacing:-0.147px;">Feb 27, 2024</div>
<div class="b" style="left:233px;top:748px;width:592px;height:322px;background:#fff;border:1px solid #ebebee;border-radius:6px;"></div>
<div class="t" style="left:251.15px;top:767px;line-height:17px;font-size:15px;color:#4d5158;letter-spacing:0.115px;">val_loss</div>
<svg class="b" style="left:750.25px;top:767.3px;" width="16" height="19" viewBox="0 0 16 19" fill="none"><rect x="2.8" y="8.6" width="11" height="8" rx="1.4" stroke="#7c8189" stroke-width="1.4"/><path d="M11.9 8.4 V6 C11.9 3.7 10.4 2.65 8.7 2.65 C7.2 2.65 6 3.4 5.5 4.5" stroke="#7c8189" stroke-width="1.4" stroke-linecap="round" fill="none"/><path d="M8.3 11.8 V13.4" stroke="#7c8189" stroke-width="1.3" stroke-linecap="round"/></svg>
<svg class="b" style="left:775.55px;top:768.3px;" width="17" height="17" viewBox="0 0 17 17" fill="none"><path d="M2.2 6 V4.4 C2.2 3 3 2.2 4.4 2.2 H6 M10.8 2.2 H12.4 C13.8 2.2 14.6 3 14.6 4.4 V6 M14.6 10.8 V12.4 C14.6 13.8 13.8 14.6 12.4 14.6 H10.8 M6 14.6 H4.4 C3 14.6 2.2 13.8 2.2 12.4 V10.8" stroke="#7c8189" stroke-width="1.4" stroke-linecap="round"/></svg>
<svg class="b" style="left:800.25px;top:766.3px;" width="10" height="22" viewBox="0 0 10 22" fill="none"><g fill="#7c8189"><circle cx="5.05" cy="4.6" r="1.45"/><circle cx="5.05" cy="10.3" r="1.45"/><circle cx="5.05" cy="15.9" r="1.45"/></g></svg>
<svg class="b" style="left:233px;top:748px;" width="592" height="322" viewBox="0 0 592 322" fill="none"><path d="M39.66 119.50 H559.41" stroke="#ededf0" stroke-width="1"/><path d="M39.66 183.50 H559.41" stroke="#ededf0" stroke-width="1"/><path d="M39.66 248.50 H559.41" stroke="#ededf0" stroke-width="1"/><path d="M89.50 64.91 V259.11" stroke="#ededf0" stroke-width="1"/><path d="M180.50 64.91 V259.11" stroke="#ededf0" stroke-width="1"/><path d="M272.50 64.91 V259.11" stroke="#ededf0" stroke-width="1"/><path d="M363.50 64.91 V259.11" stroke="#ededf0" stroke-width="1"/><path d="M454.50 64.91 V259.11" stroke="#ededf0" stroke-width="1"/><path d="M546.50 64.91 V259.11" stroke="#ededf0" stroke-width="1"/><path d="M39.66 224.86 L75.99 213.54 L113.23 178.69 L145.99 200.43 L177.26 204.60 L209.13 169.46 L241.00 185.54 L272.28 104.82 L307.42 74.44 L341.08 85.46 L373.25 105.72 L404.52 179.88 L435.80 200.13 L467.67 233.49 L497.45 245.11 L529.03 243.92" stroke="#5a5cc0" stroke-width="1.4" stroke-linejoin="round" stroke-linecap="round" fill="none"/><circle cx="529.03" cy="243.92" r="2" fill="#5a5cc0"/></svg>
<div class="t" style="left:250.55px;top:860px;line-height:15px;font-size:13px;color:#585c64;">4</div>
<div class="t" style="left:250.55px;top:924px;line-height:15px;font-size:13px;color:#585c64;">3</div>
<div class="t" style="left:250.55px;top:989px;line-height:15px;font-size:13px;color:#585c64;">2</div>
<div class="t" style="left:297.85px;top:1020px;line-height:15px;font-size:13px;color:#585c64;letter-spacing:-0.157px;">15:46:00</div>
<div class="t" style="left:388.99px;top:1020px;line-height:15px;font-size:13px;color:#585c64;letter-spacing:-0.157px;">15:46:30</div>
<div class="t" style="left:480.73px;top:1020px;line-height:15px;font-size:13px;color:#585c64;letter-spacing:-0.157px;">15:47:00</div>
<div class="t" style="left:571.87px;top:1020px;line-height:15px;font-size:13px;color:#585c64;letter-spacing:-0.157px;">15:47:30</div>
<div class="t" style="left:663.01px;top:1020px;line-height:15px;font-size:13px;color:#585c64;letter-spacing:-0.157px;">15:48:00</div>
<div class="t" style="left:754.75px;top:1020px;line-height:15px;font-size:13px;color:#585c64;letter-spacing:-0.157px;">15:48:30</div>
<div class="t" style="left:285.00px;top:1036px;line-height:15px;font-size:13px;color:#585c64;letter-spacing:-0.147px;">Feb 27, 2024</div>
<div class="b" style="left:835px;top:748px;width:592px;height:322px;background:#fff;border:1px solid #ebebee;border-radius:6px;"></div>
<div class="t" style="left:853.30px;top:767px;line-height:17px;font-size:15px;color:#4d5158;letter-spacing:0.442px;">loss</div>
<svg class="b" style="left:1352.4px;top:767.3px;" width="16" height="19" viewBox="0 0 16 19" fill="none"><rect x="2.8" y="8.6" width="11" height="8" rx="1.4" stroke="#7c8189" stroke-width="1.4"/><path d="M11.9 8.4 V6 C11.9 3.7 10.4 2.65 8.7 2.65 C7.2 2.65 6 3.4 5.5 4.5" stroke="#7c8189" stroke-width="1.4" stroke-linecap="round" fill="none"/><path d="M8.3 11.8 V13.4" stroke="#7c8189" stroke-width="1.3" stroke-linecap="round"/></svg>
<svg class="b" style="left:1377.6999999999998px;top:768.3px;" width="17" height="17" viewBox="0 0 17 17" fill="none"><path d="M2.2 6 V4.4 C2.2 3 3 2.2 4.4 2.2 H6 M10.8 2.2 H12.4 C13.8 2.2 14.6 3 14.6 4.4 V6 M14.6 10.8 V12.4 C14.6 13.8 13.8 14.6 12.4 14.6 H10.8 M6 14.6 H4.4 C3 14.6 2.2 13.8 2.2 12.4 V10.8" stroke="#7c8189" stroke-width="1.4" stroke-linecap="round"/></svg>
<svg class="b" style="left:1402.4px;top:766.3px;" width="10" height="22" viewBox="0 0 10 22" fill="none"><g fill="#7c8189"><circle cx="5.05" cy="4.6" r="1.45"/><circle cx="5.05" cy="10.3" r="1.45"/><circle cx="5.05" cy="15.9" r="1.45"/></g></svg>
<svg class="b" style="left:835px;top:748px;" width="592" height="322" viewBox="0 0 592 322" fill="none"><path d="M50.10 98.50 H557.94" stroke="#ededf0" stroke-width="1"/><path d="M50.10 152.50 H557.94" stroke="#ededf0" stroke-width="1"/><path d="M50.10 206.50 H557.94" stroke="#ededf0" stroke-width="1"/><path d="M99.50 64.91 V256.13" stroke="#ededf0" stroke-width="1"/><path d="M189.50 64.91 V256.13" stroke="#ededf0" stroke-width="1"/><path d="M278.50 64.91 V256.13" stroke="#ededf0" stroke-width="1"/><path d="M368.50 64.91 V256.13" stroke="#ededf0" stroke-width="1"/><path d="M457.50 64.91 V256.13" stroke="#ededf0" stroke-width="1"/><path d="M546.50 64.91 V256.13" stroke="#ededf0" stroke-width="1"/><path d="M51.00 75.04 L86.44 148.31 L123.08 162.01 L155.24 166.48 L185.62 182.26 L216.90 186.73 L248.17 197.45 L277.96 204.60 L313.70 207.58 L346.46 214.43 L377.74 219.79 L409.01 226.05 L439.69 229.62 L469.48 236.47 L500.45 243.32 L530.54 243.92" stroke="#8a5cb8" stroke-width="1.4" stroke-linejoin="round" stroke-linecap="round" fill="none"/><circle cx="530.54" cy="243.92" r="2" fill="#8a5cb8"/></svg>
<div class="t" style="left:852.70px;top:839px;line-height:15px;font-size:13px;color:#585c64;">2.5</div>
<div class="t" style="left:852.70px;top:893px;line-height:15px;font-size:13px;color:#585c64;">2</div>
<div class="t" style="left:852.70px;top:947px;line-height:15px;font-size:13px;color:#585c64;">1.5</div>
<div class="t" style="left:910.29px;top:1020px;line-height:15px;font-size:13px;color:#585c64;letter-spacing:-0.157px;">15:46:00</div>
<div class="t" style="left:999.95px;top:1020px;line-height:15px;font-size:13px;color:#585c64;letter-spacing:-0.157px;">15:46:30</div>
<div class="t" style="left:1088.71px;top:1020px;line-height:15px;font-size:13px;color:#585c64;letter-spacing:-0.157px;">15:47:00</div>
<div class="t" style="left:1178.66px;top:1020px;line-height:15px;font-size:13px;color:#585c64;letter-spacing:-0.157px;">15:47:30</div>
<div class="t" style="left:1268.01px;top:1020px;line-height:15px;font-size:13px;color:#585c64;letter-spacing:-0.157px;">15:48:00</div>
<div class="t" style="left:1357.07px;top:1020px;line-height:15px;font-size:13px;color:#585c64;letter-spacing:-0.157px;">15:48:30</div>
<div class="t" style="left:897.44px;top:1036px;line-height:15px;font-size:13px;color:#585c64;letter-spacing:-0.147px;">Feb 27, 2024</div>
<div class="b" style="left:1437px;top:748px;width:592px;height:322px;background:#fff;border:1px solid #ebebee;border-radius:6px;"></div>
<div class="t" style="left:1455.40px;top:767px;line-height:17px;font-size:15px;color:#4d5158;letter-spacing:0.199px;">epoch_duration</div>
<svg class="b" style="left:1954.5px;top:767.3px;" width="16" height="19" viewBox="0 0 16 19" fill="none"><rect x="2.8" y="8.6" width="11" height="8" rx="1.4" stroke="#7c8189" stroke-width="1.4"/><path d="M11.9 8.4 V6 C11.9 3.7 10.4 2.65 8.7 2.65 C7.2 2.65 6 3.4 5.5 4.5" stroke="#7c8189" stroke-width="1.4" stroke-linecap="round" fill="none"/><path d="M8.3 11.8 V13.4" stroke="#7c8189" stroke-width="1.3" stroke-linecap="round"/></svg>
<svg class="b" style="left:1979.8px;top:768.3px;" width="17" height="17" viewBox="0 0 17 17" fill="none"><path d="M2.2 6 V4.4 C2.2 3 3 2.2 4.4 2.2 H6 M10.8 2.2 H12.4 C13.8 2.2 14.6 3 14.6 4.4 V6 M14.6 10.8 V12.4 C14.6 13.8 13.8 14.6 12.4 14.6 H10.8 M6 14.6 H4.4 C3 14.6 2.2 13.8 2.2 12.4 V10.8" stroke="#7c8189" stroke-width="1.4" stroke-linecap="round"/></svg>
<svg class="b" style="left:2004.5px;top:766.3px;" width="10" height="22" viewBox="0 0 10 22" fill="none"><g fill="#7c8189"><circle cx="5.05" cy="4.6" r="1.45"/><circle cx="5.05" cy="10.3" r="1.45"/><circle cx="5.05" cy="15.9" r="1.45"/></g></svg>
<svg class="b" style="left:1437px;top:748px;" width="592" height="322" viewBox="0 0 592 322" fill="none"><path d="M46.61 87.50 H558.92" stroke="#ededf0" stroke-width="1"/><path d="M46.61 140.50 H558.92" stroke="#ededf0" stroke-width="1"/><path d="M46.61 192.50 H558.92" stroke="#ededf0" stroke-width="1"/><path d="M46.61 245.50 H558.92" stroke="#ededf0" stroke-width="1"/><path d="M96.50 64.91 V256.13" stroke="#ededf0" stroke-width="1"/><path d="M186.50 64.91 V256.13" stroke="#ededf0" stroke-width="1"/><path d="M276.50 64.91 V256.13" stroke="#ededf0" stroke-width="1"/><path d="M366.50 64.91 V256.13" stroke="#ededf0" stroke-width="1"/><path d="M456.50 64.91 V256.13" stroke="#ededf0" stroke-width="1"/><path d="M546.50 64.91 V256.13" stroke="#ededf0" stroke-width="1"/><path d="M47.51 75.04 L83.25 189.11 L120.48 185.24 L152.35 228.73 L182.14 238.86 L214.01 231.71 L244.68 235.28 L275.96 238.86 L311.11 204.30 L344.46 217.41 L375.74 232.90 L407.01 234.98 L436.80 243.03 L468.67 231.11 L498.75 247.20 L529.73 237.66" stroke="#e4b52c" stroke-width="1.4" stroke-linejoin="round" stroke-linecap="round" fill="none"/><circle cx="529.73" cy="237.66" r="2" fill="#e4b52c"/></svg>
<div class="t" style="left:1454.80px;top:828px;line-height:15px;font-size:13px;color:#585c64;">16</div>
<div class="t" style="left:1454.80px;top:881px;line-height:15px;font-size:13px;color:#585c64;">14</div>
<div class="t" style="left:1454.80px;top:933px;line-height:15px;font-size:13px;color:#585c64;">12</div>
<div class="t" style="left:1454.80px;top:986px;line-height:15px;font-size:13px;color:#585c64;">10</div>
<div class="t" style="left:1508.80px;top:1020px;line-height:15px;font-size:13px;color:#585c64;letter-spacing:-0.157px;">15:46:00</div>
<div class="t" style="left:1599.35px;top:1020px;line-height:15px;font-size:13px;color:#585c64;letter-spacing:-0.157px;">15:46:30</div>
<div class="t" style="left:1688.71px;top:1020px;line-height:15px;font-size:13px;color:#585c64;letter-spacing:-0.157px;">15:47:00</div>
<div class="t" style="left:1778.66px;top:1020px;line-height:15px;font-size:13px;color:#585c64;letter-spacing:-0.157px;">15:47:30</div>
<div class="t" style="left:1868.61px;top:1020px;line-height:15px;font-size:13px;color:#585c64;letter-spacing:-0.157px;">15:48:00</div>
<div class="t" style="left:1958.86px;top:1020px;line-height:15px;font-size:13px;color:#585c64;letter-spacing:-0.157px;">15:48:30</div>
<div class="t" style="left:1495.95px;top:1036px;line-height:15px;font-size:13px;color:#585c64;letter-spacing:-0.147px;">Feb 27, 2024</div>
<div class="b" style="left:233px;top:1081px;width:592px;height:72px;background:#fff;border:1px solid #ebebee;border-radius:6px 6px 0 0;border-bottom:none;"></div>
<div class="t" style="left:251.15px;top:1100px;line-height:17px;font-size:15px;color:#4d5158;letter-spacing:0.423px;">custom_metric</div>
<svg class="b" style="left:775.55px;top:1101.3px;" width="17" height="17" viewBox="0 0 17 17" fill="none"><path d="M2.2 6 V4.4 C2.2 3 3 2.2 4.4 2.2 H6 M10.8 2.2 H12.4 C13.8 2.2 14.6 3 14.6 4.4 V6 M14.6 10.8 V12.4 C14.6 13.8 13.8 14.6 12.4 14.6 H10.8 M6 14.6 H4.4 C3 14.6 2.2 13.8 2.2 12.4 V10.8" stroke="#7c8189" stroke-width="1.4" stroke-linecap="round"/></svg>
<svg class="b" style="left:800.25px;top:1099.3px;" width="10" height="22" viewBox="0 0 10 22" fill="none"><g fill="#7c8189"><circle cx="5.05" cy="4.6" r="1.45"/><circle cx="5.05" cy="10.3" r="1.45"/><circle cx="5.05" cy="15.9" r="1.45"/></g></svg>
<div class="b" style="left:835px;top:1081px;width:592px;height:72px;background:#fff;border:1px solid #ebebee;border-radius:6px 6px 0 0;border-bottom:none;"></div>
<div class="t" style="left:853.30px;top:1100px;line-height:17px;font-size:15px;color:#4d5158;letter-spacing:0.195px;">batch_accuracy</div>
<svg class="b" style="left:1352.4px;top:1100.3px;" width="16" height="19" viewBox="0 0 16 19" fill="none"><rect x="2.8" y="8.6" width="11" height="8" rx="1.4" stroke="#7c8189" stroke-width="1.4"/><path d="M11.9 8.4 V6 C11.9 3.7 10.4 2.65 8.7 2.65 C7.2 2.65 6 3.4 5.5 4.5" stroke="#7c8189" stroke-width="1.4" stroke-linecap="round" fill="none"/><path d="M8.3 11.8 V13.4" stroke="#7c8189" stroke-width="1.3" stroke-linecap="round"/></svg>
<svg class="b" style="left:1377.6999999999998px;top:1101.3px;" width="17" height="17" viewBox="0 0 17 17" fill="none"><path d="M2.2 6 V4.4 C2.2 3 3 2.2 4.4 2.2 H6 M10.8 2.2 H12.4 C13.8 2.2 14.6 3 14.6 4.4 V6 M14.6 10.8 V12.4 C14.6 13.8 13.8 14.6 12.4 14.6 H10.8 M6 14.6 H4.4 C3 14.6 2.2 13.8 2.2 12.4 V10.8" stroke="#7c8189" stroke-width="1.4" stroke-linecap="round"/></svg>
<svg class="b" style="left:1402.4px;top:1099.3px;" width="10" height="22" viewBox="0 0 10 22" fill="none"><g fill="#7c8189"><circle cx="5.05" cy="4.6" r="1.45"/><circle cx="5.05" cy="10.3" r="1.45"/><circle cx="5.05" cy="15.9" r="1.45"/></g></svg>
<div class="b" style="left:1437px;top:1081px;width:592px;height:72px;background:#fff;border:1px solid #ebebee;border-radius:6px 6px 0 0;border-bottom:none;"></div>
<div class="t" style="left:1455.40px;top:1100px;line-height:17px;font-size:15px;color:#4d5158;letter-spacing:0.210px;">batch_loss</div>
<svg class="b" style="left:1954.5px;top:1100.3px;" width="16" height="19" viewBox="0 0 16 19" fill="none"><rect x="2.8" y="8.6" width="11" height="8" rx="1.4" stroke="#7c8189" stroke-width="1.4"/><path d="M11.9 8.4 V6 C11.9 3.7 10.4 2.65 8.7 2.65 C7.2 2.65 6 3.4 5.5 4.5" stroke="#7c8189" stroke-width="1.4" stroke-linecap="round" fill="none"/><path d="M8.3 11.8 V13.4" stroke="#7c8189" stroke-width="1.3" stroke-linecap="round"/></svg>
<svg class="b" style="left:1979.8px;top:1101.3px;" width="17" height="17" viewBox="0 0 17 17" fill="none"><path d="M2.2 6 V4.4 C2.2 3 3 2.2 4.4 2.2 H6 M10.8 2.2 H12.4 C13.8 2.2 14.6 3 14.6 4.4 V6 M14.6 10.8 V12.4 C14.6 13.8 13.8 14.6 12.4 14.6 H10.8 M6 14.6 H4.4 C3 14.6 2.2 13.8 2.2 12.4 V10.8" stroke="#7c8189" stroke-width="1.4" stroke-linecap="round"/></svg>
<svg class="b" style="left:2004.5px;top:1099.3px;" width="10" height="22" viewBox="0 0 10 22" fill="none"><g fill="#7c8189"><circle cx="5.05" cy="4.6" r="1.45"/><circle cx="5.05" cy="10.3" r="1.45"/><circle cx="5.05" cy="15.9" r="1.45"/></g></svg>
<div class="t" style="left:261.90px;top:1138px;line-height:15px;font-size:13px;color:#585c64;">1</div>
<div class="b" style="left:544px;top:1144px;width:1px;height:8px;background:#ededf0;"></div>
<div class="b" style="left:967px;top:1144px;width:1px;height:8px;background:#ededf0;"></div>
<div class="b" style="left:1049px;top:1144px;width:1px;height:8px;background:#ededf0;"></div>
<div class="b" style="left:1134px;top:1144px;width:1px;height:8px;background:#ededf0;"></div>
<div class="b" style="left:1217px;top:1144px;width:1px;height:8px;background:#ededf0;"></div>
<div class="b" style="left:1300px;top:1144px;width:1px;height:8px;background:#ededf0;"></div>
<div class="b" style="left:1384px;top:1144px;width:1px;height:8px;background:#ededf0;"></div>
<div class="b" style="left:1558px;top:1144px;width:1px;height:8px;background:#ededf0;"></div>
<div class="b" style="left:1644px;top:1144px;width:1px;height:8px;background:#ededf0;"></div>
<div class="b" style="left:1730px;top:1144px;width:1px;height:8px;background:#ededf0;"></div>
<div class="b" style="left:1816px;top:1144px;width:1px;height:8px;background:#ededf0;"></div>
<div class="b" style="left:1900px;top:1144px;width:1px;height:8px;background:#ededf0;"></div>
<div class="b" style="left:1986px;top:1144px;width:1px;height:8px;background:#ededf0;"></div>
</div></body></html>
